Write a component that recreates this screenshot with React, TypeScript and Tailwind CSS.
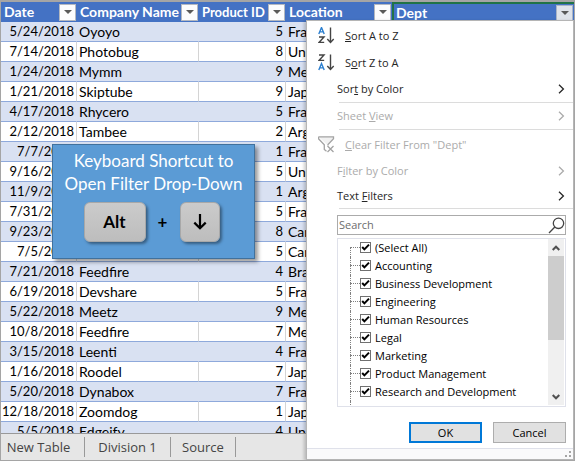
import type { ReactNode } from "react";

type Row = [date: string, company: string, id: number, location: string];

const rows: Row[] = [
  ["5/24/2018", "Oyoyo", 5, "France"],
  ["7/14/2018", "Photobug", 8, "United States"],
  ["1/24/2018", "Mymm", 9, "Mexico"],
  ["1/21/2018", "Skiptube", 9, "Japan"],
  ["4/17/2018", "Rhycero", 5, "France"],
  ["2/12/2018", "Tambee", 2, "Argentina"],
  ["7/7/2018", "", 1, "France"],
  ["9/16/2018", "", 5, "United States"],
  ["11/9/2018", "", 1, "Argentina"],
  ["7/31/2018", "", 5, "France"],
  ["9/23/2018", "", 8, "Canada"],
  ["7/5/2018", "", 5, "Canada"],
  ["7/21/2018", "Feedfire", 4, "Brazil"],
  ["6/19/2018", "Devshare", 5, "France"],
  ["5/22/2018", "Meetz", 9, "Mexico"],
  ["10/8/2018", "Feedfire", 7, "Mexico"],
  ["3/15/2018", "Leenti", 4, "France"],
  ["1/16/2018", "Roodel", 7, "Japan"],
  ["5/20/2018", "Dynabox", 7, "France"],
  ["12/18/2018", "Zoomdog", 1, "Japan"],
  ["5/5/2018", "Edgeify", 4, "United States"],
];

const departments = [
  "(Select All)",
  "Accounting",
  "Business Development",
  "Engineering",
  "Human Resources",
  "Legal",
  "Marketing",
  "Product Management",
  "Research and Development",
];

function HeaderCell({
  label,
  selected,
  numeric,
}: {
  label: string;
  selected?: boolean;
  numeric?: boolean;
}) {
  return (
    <th
      scope="col"
      className={`h-5 p-0 text-left font-bold text-white ${numeric ? "text-[13px]" : "text-sm"} ${
        selected ? "border-t-2 border-l-2 border-[#217346]" : ""
      }`}
    >
      <div className={`flex items-center justify-between pr-px ${selected ? "pl-0.5" : "pl-[3px]"}`}>
        <span className="leading-[18px] whitespace-nowrap">{label}</span>
        <button
          type="button"
          aria-label={`Filter ${label}`}
          className={`flex h-[17px] w-[17px] shrink-0 items-center justify-center border ${
            selected ? "border-[#a9b4c6] bg-[#dfe3ea]" : "border-[#b4b8c0] bg-[#fcfcfd]"
          }`}
        >
          <svg width="8" height="4" viewBox="0 0 8 4">
            <path d="M0 0h8L4 4z" fill="#595959" />
          </svg>
        </button>
      </div>
    </th>
  );
}

function Chevron() {
  return (
    <svg width="7" height="10" viewBox="0 0 7 10" fill="none" stroke="currentColor" strokeWidth="1.3">
      <path d="M1 0.8 5.4 5 1 9.2" />
    </svg>
  );
}

function SortIcon({ descending }: { descending?: boolean }) {
  const a = "M0.8 7 3.5 0.5 6.2 7M1.7 4.9h3.6";
  const z = "M1 1h5L1 6.4h5.2";
  return (
    <svg width="17" height="17" viewBox="0 0 17 17" fill="none" strokeWidth="1.4">
      <path d={a} stroke="#2b7fd0" transform={descending ? "translate(0 9)" : undefined} />
      <path d={z} stroke="#444" transform={descending ? undefined : "translate(0 9)"} />
      <path d="M12.5 0.5v14.8M9.3 12l3.2 3.4 3.2-3.4" stroke="#444" />
    </svg>
  );
}

function ClearFilterIcon() {
  return (
    <svg width="17" height="17" viewBox="0 0 17 17" fill="none" stroke="#a3a3a3">
      <path d="M0.5 0.8h15v2L10 8.5v1M0.5 0.8v2L6.3 8.8v4.7l2.2 1.8" fill="#f1f1f1" strokeWidth="1.3" />
      <path d="M9.5 10l6 6M15.5 10l-6 6" strokeWidth="1.3" />
    </svg>
  );
}

function MenuItem({
  icon,
  children,
  submenu,
  disabled,
  height,
}: {
  icon?: ReactNode;
  children: ReactNode;
  submenu?: boolean;
  disabled?: boolean;
  height: string;
}) {
  return (
    <button
      type="button"
      role="menuitem"
      disabled={disabled}
      className={`flex w-full shrink-0 items-center pr-2 text-left ${height} ${
        icon ? "pl-[11px]" : "pl-[30px]"
      } ${disabled ? "text-[#ababab]" : "text-[#262626]"}`}
    >
      {icon && <span className="mr-2.5 shrink-0">{icon}</span>}
      <span className="flex-1 whitespace-nowrap">{children}</span>
      {submenu && <Chevron />}
    </button>
  );
}

function Key({ children, width }: { children: ReactNode; width: string }) {
  return (
    <kbd
      className={`flex h-10 items-center justify-center rounded-md border border-[#a8a8a8] bg-linear-to-b from-[#cbcbcb] to-[#bdbdbd] font-[Lato,sans-serif] text-[17px] font-bold text-black shadow-[2px_2px_3px_rgba(0,0,0,0.4)] ${width}`}
    >
      {children}
    </kbd>
  );
}

function TreeRow({ label, first }: { label?: string; first?: boolean }) {
  return (
    <li className="flex h-[18px] items-center">
      <span className="flex h-full w-2.5 flex-col">
        <span className={`h-2 ${first ? "" : "border-l border-dotted border-[#808080]"}`} />
        <span className="h-2.5 border-t border-l border-dotted border-[#808080]" />
      </span>
      <label className="flex items-center whitespace-nowrap">
        <span className="relative mr-1 flex">
          <input
            type="checkbox"
            defaultChecked
            aria-label={label ? undefined : "More"}
            className="h-[11px] w-[11px] appearance-none border border-[#707070] bg-white"
          />
          <svg
            className="pointer-events-none absolute inset-0"
            width="11"
            height="11"
            viewBox="0 0 11 11"
            fill="none"
            stroke="#000"
            strokeWidth="2"
          >
            <path d="M2.2 5 4.4 7.4 9 2.6" />
          </svg>
        </span>
        {label}
      </label>
    </li>
  );
}

function FilterMenu() {
  return (
    <div
      role="menu"
      className="absolute top-[18px] right-0 bottom-0 left-[305px] flex flex-col overflow-hidden border border-[#b5b5b5] bg-white pt-px font-['Open_Sans','Noto_Sans',sans-serif] text-[11px] text-black shadow-[-2px_1px_3px_rgba(0,0,0,0.2)]"
    >
      <MenuItem height="h-[27px]" icon={<SortIcon />}>
        <u>S</u>ort A to Z
      </MenuItem>
      <MenuItem height="h-[27px]" icon={<SortIcon descending />}>
        S<u>o</u>rt Z to A
      </MenuItem>
      <MenuItem height="h-[26px]" submenu>
        Sor<u>t</u> by Color
      </MenuItem>
      <hr className="ml-8 border-[#dcdcdc]" />
      <MenuItem height="h-[26px]" submenu disabled>
        Sheet <u>V</u>iew
      </MenuItem>
      <hr className="ml-8 border-[#dcdcdc]" />
      <MenuItem height="h-[29px]" icon={<ClearFilterIcon />} disabled>
        <u>C</u>lear Filter From "Dept"
      </MenuItem>
      <MenuItem height="h-6" submenu disabled>
        F<u>i</u>lter by Color
      </MenuItem>
      <MenuItem height="h-[25px]" submenu>
        Text <u>F</u>ilters
      </MenuItem>
      <hr className="ml-8 border-[#dcdcdc]" />

      <div className="mt-1.5 mr-[7px] ml-[30px] flex h-5 shrink-0 items-center border border-[#ababab]">
        <input
          type="search"
          aria-label="Search"
          placeholder="Search"
          className="min-w-0 flex-1 pl-px outline-none placeholder:text-[#6d6d6d]"
        />
        <svg width="17" height="17" viewBox="0 0 17 17" fill="none" stroke="#444" strokeWidth="1.3">
          <circle cx="10.5" cy="6.3" r="5.2" />
          <path d="M6.8 10 1 16" />
        </svg>
      </div>

      <div className="mt-[3px] mr-[7px] ml-[30px] flex min-h-0 flex-1 border border-[#dfe1ea]">
        <ul className="mb-px min-w-0 flex-1 overflow-hidden pl-3">
          {departments.map((name, i) => (
            <TreeRow key={name} label={name} first={i === 0} />
          ))}
          <TreeRow />
        </ul>
        <div className="mr-px mb-px flex w-4 flex-col bg-[#f0f0f0] text-[#505050]">
          <div className="flex h-[17px] items-center justify-center">
            <svg width="8" height="6" viewBox="0 0 8 6" fill="none" stroke="currentColor" strokeWidth="2">
              <path d="M0.7 5 4 1.7 7.3 5" />
            </svg>
          </div>
          <div className="h-[84px] bg-[#cdcdcd]" />
          <div className="flex-1" />
          <div className="flex h-[17px] items-center justify-center">
            <svg width="8" height="6" viewBox="0 0 8 6" fill="none" stroke="currentColor" strokeWidth="2">
              <path d="M0.7 1 4 4.3 7.3 1" />
            </svg>
          </div>
        </div>
      </div>

      <div className="mt-[15px] mr-[7px] flex shrink-0 justify-end gap-[11px]">
        <button type="button" className="h-[21px] w-[73px] border-2 border-[#0078d7] bg-[#e1e1e1]">
          OK
        </button>
        <button type="button" className="h-[21px] w-[73px] border border-[#adadad] bg-[#e1e1e1]">
          Cancel
        </button>
      </div>

      <div className="mt-[5px] flex h-[11px] shrink-0 items-end justify-end border-t border-[#dfe1ea] bg-[#fafafb] p-0.5">
        <svg width="6" height="6" viewBox="0 0 6 6" fill="#a5a5a5">
          <path d="M4 0h2v2H4zM4 4h2v2H4zM0 4h2v2H0z" />
        </svg>
      </div>
    </div>
  );
}

export default function App() {
  return (
    <div className="relative flex h-screen w-full flex-col overflow-hidden border border-t-2 border-[#a5a5a5] bg-white font-[Lato,sans-serif] text-sm text-black">
      <div className="min-h-0 flex-1 overflow-hidden">
        <table className="w-full table-fixed border-separate border-spacing-0">
          <colgroup>
            <col className="w-[76px]" />
            <col className="w-[122px]" />
            <col className="w-[87px]" />
            <col className="w-[106px]" />
            <col />
          </colgroup>
          <thead className="bg-[#4472c4]">
            <tr>
              <HeaderCell label="Date" />
              <HeaderCell label="Company Name" />
              <HeaderCell label="Product ID" numeric />
              <HeaderCell label="Location" />
              <HeaderCell label="Dept" selected />
            </tr>
          </thead>
          <tbody className="[&_td]:h-5 [&_td]:overflow-hidden [&_td]:border-b [&_td]:border-b-[#8ea9db] [&_td]:py-0 [&_td]:leading-[19px] [&_td]:whitespace-nowrap">
            {rows.map(([date, company, id, location], i) => {
              const line = i % 2 ? "border-r border-r-[#d4d4d4]" : "border-r border-r-[#d9e1f2]";
              return (
                <tr key={date} className={i % 2 ? "bg-white" : "bg-[#d9e1f2]"}>
                  <td className={`pr-0.5 text-right text-[13px] ${line}`}>{date}</td>
                  <td className={`pl-0.5 ${line}`}>{company}</td>
                  <td className={`pr-0.5 text-right text-[13px] ${line}`}>{id}</td>
                  <td className={`pl-0.5 ${line}`}>{location}</td>
                  <td />
                </tr>
              );
            })}
          </tbody>
        </table>
      </div>

      <nav className="flex h-[27px] shrink-0 items-center border-t border-[#999] bg-[#e6e6e6] font-['Open_Sans','Noto_Sans',sans-serif] text-[13px] text-[#444]">
        <button type="button" className="h-5 w-[84px] border-r border-[#999] pr-2">
          New Table
        </button>
        <button type="button" className="h-5 w-[86px] border-r border-[#999]">
          Division 1
        </button>
        <button type="button" className="h-5 w-[65px] border-r border-[#999]">
          Source
        </button>
      </nav>

      <aside className="absolute top-[142px] left-[51px] flex h-[115px] w-[203px] flex-col items-center border border-[#41719c] bg-[#5b9bd5] pt-1 shadow-[3px_3px_4px_rgba(0,0,0,0.4)]">
        <p className="text-center text-[17px] leading-[23px] text-white">
          Keyboard Shortcut to
          <br />
          Open Filter Drop-Down
        </p>
        <div className="mt-[7px] flex items-center pr-1">
          <Key width="w-[62px]">Alt</Key>
          <span className="w-[34px] text-center text-[17px] font-bold">+</span>
          <Key width="w-10">
            <svg width="14" height="16" viewBox="0 0 14 16" fill="none" stroke="#000" strokeWidth="2.2">
              <path d="M7 0v14M1.3 8.6 7 14.3l5.7-5.7" />
            </svg>
          </Key>
        </div>
      </aside>

      <FilterMenu />
    </div>
  );
}
